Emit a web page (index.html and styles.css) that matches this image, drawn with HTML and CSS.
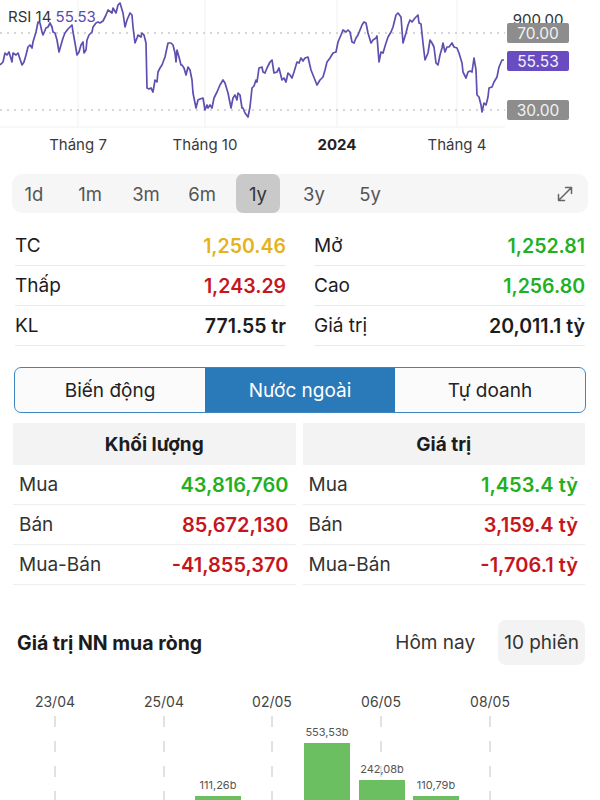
FILE: index.html
```html
<!DOCTYPE html>
<html lang="vi">

<head>
    <meta charset="UTF-8">
    <title>VN-Index</title>
    <link rel="stylesheet" href="styles.css">
</head>

<body>
    <!-- RSI chart -->
    <svg class="rsi" width="600" height="160" viewBox="0 0 600 160">
        <g class="grid">
            <line x1="78" y1="0" x2="78" y2="127" />
            <line x1="205" y1="0" x2="205" y2="127" />
            <line x1="337" y1="0" x2="337" y2="127" />
            <line x1="457" y1="0" x2="457" y2="127" />
            <line x1="0" y1="127" x2="505" y2="127" />
        </g>
        <line class="level" x1="0" y1="33" x2="505" y2="33" />
        <line class="level" x1="0" y1="110" x2="505" y2="110" />
        <polyline class="rsi-line" points="0,65 3,62 5,53 7,55 9,52 12,62 13,53 16,55 18,53 21,62 22,65 24,62 26,55 28,47 30,45 32,48 33,42 36,32 38,22 40,23 42,32 43,35 46,28 48,27 50,23 52,27 53,32 55,33 57,40 59,52 61,45 63,38 65,33 68,29 70,27 72,25 73,32 75,43 77,55 79,52 81,45 83,42 84,53 86,50 87,40 89,35 92,32 93,27 96,23 98,22 100,23 103,21 106,15 108,10 112,13 113,8 116,13 118,5 120,3 123,13 125,27 127,20 130,13 132,15 133,27 135,43 137,38 138,35 141,37 142,33 144,35 146,43 147,88 149,89 151,88 153,92 155,80 157,82 158,72 160,68 162,65 165,57 168,43 171,43 173,45 175,53 176,62 177,50 179,57 181,65 182,65 184,68 186,75 188,67 190,70 192,80 193,93 196,108 198,100 200,99 203,98 205,110 207,105 208,108 210,105 212,108 214,98 217,92 220,85 223,80 225,83 228,93 231,108 233,98 235,95 237,100 238,93 240,95 242,108 243,108 245,113 248,117 250,107 252,88 254,86 256,80 257,82 259,68 262,67 263,72 265,73 267,68 270,62 272,60 274,73 277,72 279,68 282,80 284,78 286,82 288,73 290,75 292,78 294,72 297,62 299,63 301,58 303,61 305,58 308,57 311,70 313,75 317,85 320,80 323,77 325,70 327,62 330,58 333,53 336,52 338,42 341,35 343,30 346,32 348,30 350,32 352,42 354,43 356,38 358,35 362,25 364,22 366,23 368,33 371,43 373,40 376,38 377,36 379,62 381,52 383,53 386,43 388,37 391,32 393,27 396,15 398,13 401,17 403,43 406,33 408,25 410,20 412,22 415,18 418,15 419,23 421,24 423,43 425,60 428,53 430,40 432,43 434,47 436,63 438,65 440,55 442,48 443,43 445,52 447,47 449,47 452,43 454,47 457,48 459,53 462,63 463,72 466,78 468,72 470,71 472,72 474,58 476,70 477,95 479,97 481,105 482,112 484,103 486,105 488,97 489,88 492,87 494,82 497,77 499,67 502,60 504,60" />
        <text class="rsi-title" x="8" y="22">RSI 14 <tspan class="rsi-val">55.53</tspan></text>
        <text class="scale" x="538" y="25">900.00</text>
        <rect class="tag" x="507" y="23" width="62" height="20" rx="2" />
        <text class="tag-text" x="538" y="38.5">70.00</text>
        <rect class="tag now" x="507" y="51" width="62" height="20" rx="2" />
        <text class="tag-text" x="538" y="66.5">55.53</text>
        <rect class="tag" x="507" y="100" width="62" height="20" rx="2" />
        <text class="tag-text" x="538" y="115.5">30.00</text>
        <text class="axis" x="78" y="150">Tháng 7</text>
        <text class="axis" x="205" y="150">Tháng 10</text>
        <text class="axis year" x="337" y="150">2024</text>
        <text class="axis" x="457" y="150">Tháng 4</text>
    </svg>

    <div class="ranges">
        <span>1d</span>
        <span>1m</span>
        <span>3m</span>
        <span>6m</span>
        <span class="on">1y</span>
        <span>3y</span>
        <span>5y</span>
        <svg class="expand" width="20" height="20" viewBox="0 0 20 20">
            <path d="M3.5 16.5 L16.5 3.5 M10.5 3.5 H16.5 V9.5 M3.5 10.5 V16.5 H9.5" />
        </svg>
    </div>

    <div class="stats">
        <div class="stat"><span>TC</span><span class="v ref">1,250.46</span></div>
        <div class="stat"><span>Mở</span><span class="v up">1,252.81</span></div>
        <div class="stat"><span>Thấp</span><span class="v down">1,243.29</span></div>
        <div class="stat"><span>Cao</span><span class="v up">1,256.80</span></div>
        <div class="stat"><span>KL</span><span class="v">771.55 tr</span></div>
        <div class="stat"><span>Giá trị</span><span class="v">20,011.1 tỷ</span></div>
    </div>

    <div class="tabs">
        <div class="tab">Biến động</div>
        <div class="tab active">Nước ngoài</div>
        <div class="tab">Tự doanh</div>
    </div>

    <div class="foreign">
        <div class="fcol">
            <div class="fhead">Khối lượng</div>
            <div class="frow"><span>Mua</span><span class="v up">43,816,760</span></div>
            <div class="frow"><span>Bán</span><span class="v down">85,672,130</span></div>
            <div class="frow"><span>Mua-Bán</span><span class="v down">-41,855,370</span></div>
        </div>
        <div class="fcol">
            <div class="fhead">Giá trị</div>
            <div class="frow"><span>Mua</span><span class="v up">1,453.4 tỷ</span></div>
            <div class="frow"><span>Bán</span><span class="v down">3,159.4 tỷ</span></div>
            <div class="frow"><span>Mua-Bán</span><span class="v down">-1,706.1 tỷ</span></div>
        </div>
    </div>

    <div class="nn-head">
        <h2>Giá trị NN mua ròng</h2>
        <div class="nn-opts">
            <span class="opt">Hôm nay</span>
            <span class="opt on">10 phiên</span>
        </div>
    </div>

    <!-- net foreign buy, 10 sessions -->
    <svg class="nn-chart" width="600" height="115" viewBox="0 0 600 115">
        <g class="dates">
            <text x="55" y="22">23/04</text>
            <text x="164" y="22">25/04</text>
            <text x="272" y="22">02/05</text>
            <text x="381" y="22">06/05</text>
            <text x="490" y="22">08/05</text>
        </g>
        <g class="ticks">
            <line x1="55" y1="31" x2="55" y2="115" />
            <line x1="164" y1="31" x2="164" y2="115" />
            <line x1="272" y1="31" x2="272" y2="115" />
            <line x1="381" y1="31" x2="381" y2="115" />
            <line x1="490" y1="31" x2="490" y2="115" />
        </g>
        <g class="bars">
            <rect x="195" y="111" width="46" height="10" />
            <rect x="304" y="58" width="46" height="63" />
            <rect x="359" y="95" width="46" height="26" />
            <rect x="413" y="111" width="46" height="10" />
        </g>
        <g class="bar-val">
            <text x="218" y="104">111,26b</text>
            <text x="327" y="51">553,53b</text>
            <text x="382" y="88">242,08b</text>
            <text x="436" y="104">110,79b</text>
        </g>
    </svg>
</body>

</html>
```

FILE: styles.css
```css
body {
    margin: 0;
    width: 600px;
    background-color: #fff;
    color: #1c1c1e;
    font-family: Inter, 'Noto Sans', sans-serif;
    overflow: hidden;
}

/* RSI chart */
.rsi {
    display: block;
}

.rsi .grid line {
    stroke: #f1f1f1;
    stroke-width: 1;
}

.rsi .level {
    stroke: #c9c9c9;
    stroke-width: 1.3;
    stroke-dasharray: 2 5;
}

.rsi-line {
    fill: none;
    stroke: #5e4fb0;
    stroke-width: 1.7;
    stroke-linejoin: round;
}

.rsi-title {
    font-size: 15px;
    fill: #333;
}

.rsi-val {
    fill: #5b4aae;
}

.scale {
    font-size: 15px;
    fill: #333;
    text-anchor: middle;
}

.tag {
    fill: #8d8d8d;
}

.tag.now {
    fill: #6a4cc2;
}

.tag-text {
    font-size: 15.5px;
    fill: #f2f2f2;
    text-anchor: middle;
}

.axis {
    font-size: 15px;
    fill: #3a3a3a;
    text-anchor: middle;
}

.axis.year {
    font-weight: 700;
    fill: #222;
}

/* time ranges */
.ranges {
    margin: 14px 12px 0;
    height: 39px;
    background-color: #f6f6f7;
    border-radius: 10px;
    display: flex;
    align-items: center;
    gap: 12px;
}

.ranges span {
    width: 44px;
    height: 39px;
    display: flex;
    align-items: center;
    justify-content: center;
    font-size: 18.5px;
    color: #555;
    border-radius: 7px;
}

.ranges .on {
    background-color: #c9c9c9;
    color: #333;
}

.expand {
    margin-left: auto;
    margin-right: 13px;
}

.expand path {
    fill: none;
    stroke: #666;
    stroke-width: 1.5;
    stroke-linecap: round;
    stroke-linejoin: round;
}

/* price stats */
.stats {
    display: grid;
    grid-template-columns: 1fr 1fr;
    column-gap: 28px;
    padding: 0 15px;
    margin-top: 13px;
}

.stat {
    display: flex;
    justify-content: space-between;
    align-items: center;
    height: 39px;
    border-bottom: 1px solid #ebebeb;
    font-size: 19px;
}

.v {
    font-weight: 600;
    font-size: 19.5px;
}

.up {
    color: #22b022;
}

.down {
    color: #c5161d;
}

.ref {
    color: #e6b21c;
}

/* segmented tabs */
.tabs {
    margin: 21px 14px 0;
    display: flex;
    height: 44px;
    border: 1px solid #3f86c0;
    border-radius: 7px;
    overflow: hidden;
    background-color: #fbfbfb;
}

.tab {
    flex: 1;
    display: flex;
    align-items: center;
    justify-content: center;
    font-size: 19px;
    color: #222;
}

.tab.active {
    background-color: #2a7ab9;
    color: #fff;
}

/* foreign trading */
.foreign {
    display: grid;
    grid-template-columns: 1fr 1fr;
    column-gap: 7px;
    margin: 10px 15px 0 13px;
}

.fhead {
    height: 42px;
    background-color: #f3f3f3;
    display: flex;
    align-items: center;
    justify-content: center;
    font-size: 19px;
    font-weight: 700;
}

.frow {
    height: 39px;
    border-bottom: 1px solid #eeeeee;
    display: flex;
    justify-content: space-between;
    align-items: center;
    padding: 0 7px 0 6px;
    font-size: 19px;
    color: #333;
}

.frow .v {
    font-size: 20px;
}

/* net foreign buy */
.nn-head {
    display: flex;
    align-items: center;
    height: 45px;
    margin: 35px 15px 0 17px;
}

.nn-head h2 {
    margin: 0;
    font-size: 19.5px;
    font-weight: 700;
}

.nn-opts {
    margin-left: auto;
    display: flex;
    gap: 17px;
}

.opt {
    height: 45px;
    padding: 0 6px;
    display: flex;
    align-items: center;
    font-size: 19px;
    color: #333;
    border-radius: 8px;
}

.opt.on {
    background-color: #f3f3f3;
}

.nn-chart {
    display: block;
    margin-top: 20px;
}

.dates text {
    font-size: 14px;
    fill: #444;
    text-anchor: middle;
}

.ticks line {
    stroke: #c4c4c4;
    stroke-width: 1;
    stroke-dasharray: 11 14;
}

.bars rect {
    fill: #6cbf60;
}

.bar-val text {
    font-size: 11px;
    fill: #555;
    text-anchor: middle;
}
```
